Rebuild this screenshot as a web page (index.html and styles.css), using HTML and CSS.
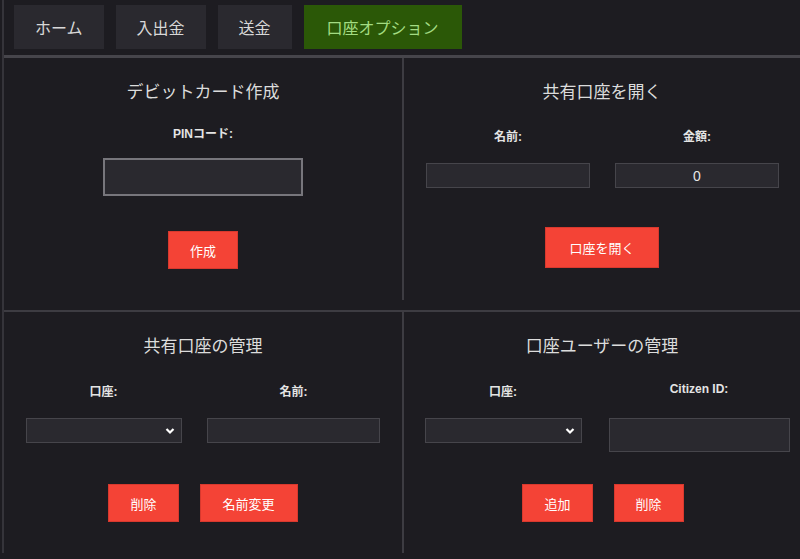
FILE: index.html
```html
<!DOCTYPE html>
<html lang="ja">
<head>
    <meta charset="UTF-8">
    <title>口座オプション</title>
    <link rel="stylesheet" href="styles.css">
</head>
<body>
    <div class="app">
        <nav class="tabs">
            <button class="tab">ホーム</button>
            <button class="tab">入出金</button>
            <button class="tab">送金</button>
            <button class="tab active">口座オプション</button>
        </nav>

        <div class="panels">
            <section class="panel">
                <h2>デビットカード作成</h2>
                <label class="label pin-label">PINコード:</label>
                <input type="password" class="pin-input">
                <div class="actions pin-actions">
                    <button class="btn">作成</button>
                </div>
            </section>

            <section class="panel right">
                <h2>共有口座を開く</h2>
                <div class="fields open-fields">
                    <div class="field">
                        <label class="label">名前:</label>
                        <input type="text" class="input w164">
                    </div>
                    <div class="field">
                        <label class="label">金額:</label>
                        <input type="text" class="input w164 num" value="0">
                    </div>
                </div>
                <div class="actions open-actions">
                    <button class="btn tall">口座を開く</button>
                </div>
            </section>

            <section class="panel">
                <h2>共有口座の管理</h2>
                <div class="fields">
                    <div class="field">
                        <label class="label">口座:</label>
                        <div class="select-wrap w156">
                            <select class="select"></select>
                            <svg class="chevron" width="10" height="8" viewBox="0 0 10 8"><path d="M1.5 2 L5 5.5 L8.5 2" fill="none" stroke="#fff" stroke-width="2.2"/></svg>
                        </div>
                    </div>
                    <div class="field shift">
                        <label class="label">名前:</label>
                        <input type="text" class="input w173">
                    </div>
                </div>
                <div class="actions">
                    <button class="btn">削除</button>
                    <button class="btn wide">名前変更</button>
                </div>
            </section>

            <section class="panel right">
                <h2>口座ユーザーの管理</h2>
                <div class="fields">
                    <div class="field">
                        <label class="label">口座:</label>
                        <div class="select-wrap w157">
                            <select class="select"></select>
                            <svg class="chevron" width="10" height="8" viewBox="0 0 10 8"><path d="M1.5 2 L5 5.5 L8.5 2" fill="none" stroke="#fff" stroke-width="2.2"/></svg>
                        </div>
                    </div>
                    <div class="field cid">
                        <label class="label latin">Citizen ID:</label>
                        <input type="text" class="input w181 tall-input">
                    </div>
                </div>
                <div class="actions user-actions">
                    <button class="btn">追加</button>
                    <button class="btn">削除</button>
                </div>
            </section>
        </div>
    </div>
</body>
</html>
```

FILE: styles.css
```css
* {
    margin: 0;
    padding: 0;
    box-sizing: border-box;
}

body {
    background: #1d1c21;
    font-family: "Liberation Sans", "Noto Sans CJK JP", sans-serif;
    color: #e2e2e2;
    height: 559px;
    overflow: hidden;
}

.app {
    margin-left: 2px;
    border-left: 2px solid #35343a;
    height: 553px;
}

.tabs {
    display: flex;
    gap: 12px;
    padding: 5px 0 0 10px;
    height: 55px;
}

.tab {
    height: 44px;
    padding: 0 21px;
    border: none;
    background: #2a292f;
    color: #d8d8d8;
    font-family: "Noto Sans CJK JP", sans-serif;
    font-size: 16px;
}

.tab.active {
    background: #2b5807;
    color: #a3dc82;
    padding: 0 23px;
}

.panels {
    display: grid;
    grid-template-columns: 398px 1fr;
    grid-template-rows: 242px 243px;
    row-gap: 10px;
    border-top: 3px solid #46454b;
}

.panels .panel:nth-child(n+3) {
    border-top: 2px solid #3d3c42;
}

.panel {
    display: flex;
    flex-direction: column;
    align-items: center;
    padding-top: 21px;
}

.panel.right {
    border-left: 2px solid #3d3c42;
}

.panel h2 {
    font-family: "Noto Sans CJK JP", sans-serif;
    font-size: 17px;
    font-weight: normal;
    line-height: 24px;
    color: #dcdcdc;
}

.label {
    font-size: 12px;
    font-weight: bold;
    line-height: 16px;
    color: #e4e4e4;
}

.pin-label {
    margin-top: 23px;
}

.pin-input {
    margin-top: 16px;
    width: 200px;
    height: 38px;
    background: #2a292f;
    border: 2px solid #77767c;
}

.fields {
    display: grid;
    grid-template-columns: 1fr 1fr;
    align-items: start;
    width: 100%;
    height: 59px;
    margin-top: 26px;
}

.panel:nth-child(n+3) .fields {
    margin-top: 27px;
}

.field {
    display: flex;
    flex-direction: column;
    align-items: center;
    gap: 18px;
}

.field.shift {
    padding-right: 18px;
}

.field.cid {
    padding-right: 4px;
}

.label.latin {
    margin-top: -3px;
    margin-bottom: 3px;
}

.input,
.select {
    height: 25px;
    background: #2a292f;
    border: 1px solid #46454b;
    color: #e6e6e6;
    font-size: 13px;
    font-family: "Liberation Sans", sans-serif;
}

.input.num {
    text-align: center;
    font-size: 14px;
}

.w164 { width: 164px; }
.w173 { width: 173px; }
.w181 { width: 181px; }
.w156 { width: 156px; }
.w157 { width: 157px; }

.open-fields .field:first-child {
    padding-left: 10px;
}

.open-fields .field:last-child {
    padding-right: 8px;
}

.tall-input {
    height: 34px;
}

.select-wrap {
    position: relative;
    height: 25px;
}

.select {
    width: 100%;
    appearance: none;
    -webkit-appearance: none;
    border-radius: 0;
}

.chevron {
    position: absolute;
    right: 7px;
    top: 9px;
}

.actions {
    display: flex;
    gap: 21px;
    margin-top: 41px;
}

.pin-actions {
    margin-top: 35px;
}

.open-actions {
    margin-top: 39px;
}

.user-actions {
    padding-left: 2px;
}

.btn {
    height: 38px;
    padding: 0 21px;
    border: 1px solid #d8392e;
    background: #f44336;
    color: #fff;
    font-family: "Noto Sans CJK JP", sans-serif;
    font-size: 13px;
}

.btn.wide {
    padding: 0 22px;
}

.btn.tall {
    height: 41px;
    padding: 0 23px;
}
```
